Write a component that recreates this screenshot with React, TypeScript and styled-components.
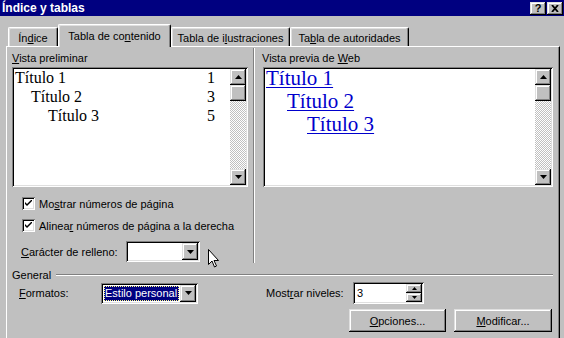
import React from "react";
import styled, { createGlobalStyle, css } from "styled-components";

const GlobalStyle = createGlobalStyle`
  html, body {
    margin: 0;
    padding: 0;
    background: #c0c0c0;
  }
  body {
    font-family: "Liberation Sans", Arial, sans-serif;
    font-size: 11px;
    color: #000;
  }
`;

const raised = css`
  background: #c0c0c0;
  box-shadow: inset -1px -1px #000, inset 1px 1px #dfdfdf,
    inset -2px -2px #808080, inset 2px 2px #fff;
`;

const sunken = css`
  box-shadow: inset 1px 1px #808080, inset -1px -1px #fff,
    inset 2px 2px #000, inset -2px -2px #dfdfdf;
`;

const Window = styled.div`
  position: relative;
  width: 564px;
  height: 338px;
  overflow: hidden;
  background: #c0c0c0;
  display: flex;
  flex-direction: column;
`;

const TitleBar = styled.div`
  height: 16px;
  background: #000080;
  display: flex;
  align-items: center;
  justify-content: space-between;
  padding: 0 1px 0 2px;
`;

const TitleText = styled.span`
  color: #fff;
  font-weight: bold;
  font-size: 12px;
  line-height: 16px;
`;

const TitleButtons = styled.div`
  display: flex;
  gap: 1px;
`;

const TitleButton = styled.div`
  ${raised};
  width: 16px;
  height: 13px;
  display: flex;
  align-items: center;
  justify-content: center;
  font-weight: bold;
  font-size: 11px;
  line-height: 13px;
`;

const Body = styled.div`
  flex: 1;
  display: flex;
  flex-direction: column;
  padding: 8px 4px 0 6px;
`;

const TabStrip = styled.div`
  position: relative;
  z-index: 1;
  height: 22px;
  display: flex;
  align-items: flex-end;
  padding-left: 2px;
`;

const Tab = styled.div<{ $w: number; $active?: boolean }>`
  width: ${(p) => p.$w}px;
  height: ${(p) => (p.$active ? 23 : 19)}px;
  margin-bottom: ${(p) => (p.$active ? -1 : 0)}px;
  box-sizing: border-box;
  background: #c0c0c0;
  border-top: 1px solid #fff;
  border-left: 1px solid #fff;
  border-right: 1px solid #000;
  border-radius: 2px 2px 0 0;
  box-shadow: inset -1px 0 #808080, inset 1px 1px #dfdfdf;
  display: flex;
  align-items: center;
  justify-content: center;
  padding-top: ${(p) => (p.$active ? 0 : 1)}px;
  white-space: nowrap;
`;

const Panel = styled.div`
  position: relative;
  flex: 1;
  display: flex;
  flex-direction: column;
  border-top: 1px solid #fff;
  border-left: 1px solid #fff;
  border-right: 1px solid #000;
  box-shadow: inset -1px 0 #808080;
  padding: 1px 6px 0 5px;
`;

const PreviewRow = styled.div`
  display: flex;
  align-items: stretch;
`;

const Column = styled.div<{ $w?: number }>`
  display: flex;
  flex-direction: column;
  padding-top: 4px;
  ${(p) => (p.$w ? `width: ${p.$w}px;` : "flex: 1;")}
`;

const Separator = styled.div`
  width: 0;
  margin: 0 7px 0 5px;
  border-left: 1px solid #808080;
  border-right: 1px solid #fff;
`;

const Label = styled.div`
  height: 13px;
  line-height: 13px;
  margin-bottom: 2px;
  white-space: nowrap;
`;

const Key = styled.u`
  text-decoration: underline;
`;

const PreviewBox = styled.div<{ $inset?: number }>`
  ${sunken};
  background: #fff;
  height: 120px;
  box-sizing: border-box;
  padding: 2px;
  margin-left: ${(p) => p.$inset ?? 0}px;
  display: flex;
`;

const PreviewContent = styled.div`
  flex: 1;
  background: #fff;
  padding-left: 1px;
`;

const PrintList = styled.div`
  margin-top: -1px;
  padding-right: 15px;
  font-family: "Liberation Serif", "Times New Roman", serif;
  font-size: 16px;
  line-height: 19px;
`;

const PrintLine = styled.div<{ $indent: number }>`
  display: flex;
  justify-content: space-between;
  padding-left: ${(p) => p.$indent}px;
`;

const WebList = styled.div`
  margin-top: -2px;
  font-family: "Liberation Serif", "Times New Roman", serif;
  font-size: 21px;
  line-height: 23px;
`;

const WebLink = styled.div<{ $indent: number }>`
  padding-left: ${(p) => p.$indent}px;
  color: #0000cc;
  text-decoration: underline;
  text-decoration-thickness: 1px;
  text-underline-offset: 2px;
`;

const ScrollBar = styled.div`
  width: 16px;
  display: flex;
  flex-direction: column;
`;

const ScrollButton = styled.div<{ $h?: number }>`
  ${raised};
  width: 16px;
  height: ${(p) => p.$h ?? 16}px;
  display: flex;
  align-items: center;
  justify-content: center;
`;

const Track = styled.div`
  flex: 1;
  background-color: #fff;
  background-image: repeating-conic-gradient(#c0c0c0 0% 25%, #fff 0% 50%);
  background-size: 2px 2px;
`;

const CheckRow = styled.div<{ $top: number }>`
  margin-top: ${(p) => p.$top}px;
  padding-left: 10px;
  height: 13px;
  display: flex;
  align-items: center;
  gap: 4px;
  white-space: nowrap;
`;

const CheckBox = styled.div`
  ${sunken};
  width: 13px;
  height: 13px;
  background: #fff;
  display: flex;
  align-items: center;
  justify-content: center;
`;

const FieldRow = styled.div<{ $top: number; $h: number }>`
  margin-top: ${(p) => p.$top}px;
  height: ${(p) => p.$h}px;
  display: flex;
  align-items: center;
  white-space: nowrap;
`;

const FieldLabel = styled.div<{ $w: number; $indent?: number; $gap?: number }>`
  width: ${(p) => p.$w}px;
  padding-left: ${(p) => p.$indent ?? 0}px;
  margin-left: ${(p) => p.$gap ?? 0}px;
  box-sizing: border-box;
`;

const Combo = styled.div<{ $w: number; $h: number }>`
  ${sunken};
  background: #fff;
  width: ${(p) => p.$w}px;
  height: ${(p) => p.$h}px;
  box-sizing: border-box;
  padding: 2px;
  display: flex;
`;

const ComboValue = styled.div<{ $selected?: boolean }>`
  flex: 1;
  margin: 1px;
  display: flex;
  align-items: center;
  padding-left: 1px;
  ${(p) =>
    p.$selected &&
    css`
      background: #000080;
      color: #fff;
      outline: 1px dotted #ffff80;
      outline-offset: -1px;
    `}
`;

const SpinButtons = styled.div`
  display: flex;
  flex-direction: column;
`;

const GroupHeader = styled.div`
  margin-top: 5px;
  height: 13px;
  display: flex;
  align-items: center;
  gap: 5px;
`;

const GroupLine = styled.div`
  flex: 1;
  border-top: 1px solid #808080;
  border-bottom: 1px solid #fff;
`;

const ButtonRow = styled.div`
  margin-top: 5px;
  display: flex;
  justify-content: flex-end;
  gap: 8px;
  padding-right: 1px;
`;

const PushButton = styled.div<{ $w: number }>`
  ${raised};
  width: ${(p) => p.$w}px;
  height: 23px;
  display: flex;
  align-items: center;
  justify-content: center;
`;

const Cursor = styled.svg`
  position: absolute;
  left: 208px;
  top: 249px;
`;

const Arrow = ({ up }: { up?: boolean }) => (
  <svg width="7" height="4" viewBox="0 0 7 4">
    <path d={up ? "M3.5 0 L7 4 L0 4 Z" : "M0 0 L7 0 L3.5 4 Z"} fill="#000" />
  </svg>
);

const SmallArrow = ({ up }: { up?: boolean }) => (
  <svg width="5" height="3" viewBox="0 0 5 3">
    <path d={up ? "M2.5 0 L5 3 L0 3 Z" : "M0 0 L5 0 L2.5 3 Z"} fill="#000" />
  </svg>
);

const Scroller = () => (
  <ScrollBar>
    <ScrollButton>
      <Arrow up />
    </ScrollButton>
    <ScrollButton />
    <Track />
    <ScrollButton>
      <Arrow />
    </ScrollButton>
  </ScrollBar>
);

const Check = () => (
  <svg width="7" height="7" viewBox="0 0 7 7">
    <path d="M0 2 L2 4 L7 -1 L7 1 L2 6 L0 4 Z" fill="#000" />
  </svg>
);

const printEntries = [
  { title: "Título 1", page: "1", indent: 0 },
  { title: "Título 2", page: "3", indent: 16 },
  { title: "Título 3", page: "5", indent: 33 },
];

const webEntries = [
  { title: "Título 1", indent: 0 },
  { title: "Título 2", indent: 21 },
  { title: "Título 3", indent: 41 },
];

export default function App() {
  return (
    <>
      <GlobalStyle />
      <Window>
        <TitleBar>
          <TitleText>Índice y tablas</TitleText>
          <TitleButtons>
            <TitleButton>?</TitleButton>
            <TitleButton>
              <svg width="8" height="7" viewBox="0 0 8 7">
                <path d="M1 0 L7 7 M7 0 L1 7" stroke="#000" strokeWidth="1.8" />
              </svg>
            </TitleButton>
          </TitleButtons>
        </TitleBar>
        <Body>
          <TabStrip>
            <Tab $w={50}>
              Ín<Key>d</Key>ice
            </Tab>
            <Tab $w={113} $active>
              Tabla de co<Key>n</Key>tenido
            </Tab>
            <Tab $w={119}>
              Tabla de i<Key>l</Key>ustraciones
            </Tab>
            <Tab $w={119}>
              Ta<Key>b</Key>la de autoridades
            </Tab>
          </TabStrip>
          <Panel>
            <PreviewRow>
              <Column $w={236}>
                <Label>
                  <Key>V</Key>ista preliminar
                </Label>
                <PreviewBox>
                  <PreviewContent>
                    <PrintList>
                      {printEntries.map((e) => (
                        <PrintLine key={e.title} $indent={e.indent}>
                          <span>{e.title}</span>
                          <span>{e.page}</span>
                        </PrintLine>
                      ))}
                    </PrintList>
                  </PreviewContent>
                  <Scroller />
                </PreviewBox>
                <CheckRow $top={10}>
                  <CheckBox>
                    <Check />
                  </CheckBox>
                  <span>
                    Mo<Key>s</Key>trar números de página
                  </span>
                </CheckRow>
                <CheckRow $top={9}>
                  <CheckBox>
                    <Check />
                  </CheckBox>
                  <span>
                    Alinea<Key>r</Key> números de página a la derecha
                  </span>
                </CheckRow>
                <FieldRow $top={9} $h={21}>
                  <FieldLabel $w={114} $indent={9}>
                    <Key>C</Key>arácter de relleno:
                  </FieldLabel>
                  <Combo $w={74} $h={21}>
                    <ComboValue />
                    <ScrollButton $h={17}>
                      <Arrow />
                    </ScrollButton>
                  </Combo>
                </FieldRow>
                <div style={{ height: 1 }} />
              </Column>
              <Separator />
              <Column>
                <Label>
                  Vista previa de <Key>W</Key>eb
                </Label>
                <PreviewBox $inset={1}>
                  <PreviewContent>
                    <WebList>
                      {webEntries.map((e) => (
                        <WebLink key={e.title} $indent={e.indent}>
                          {e.title}
                        </WebLink>
                      ))}
                    </WebList>
                  </PreviewContent>
                  <Scroller />
                </PreviewBox>
              </Column>
            </PreviewRow>
            <GroupHeader>
              <span>General</span>
              <GroupLine />
            </GroupHeader>
            <FieldRow $top={1} $h={22}>
              <FieldLabel $w={89} $indent={7}>
                <Key>F</Key>ormatos:
              </FieldLabel>
              <Combo $w={97} $h={21}>
                <ComboValue $selected>Estilo personal</ComboValue>
                <ScrollButton $h={17}>
                  <Arrow />
                </ScrollButton>
              </Combo>
              <FieldLabel $w={87} $gap={68}>
                Most<Key>r</Key>ar niveles:
              </FieldLabel>
              <Combo $w={71} $h={22}>
                <ComboValue>3</ComboValue>
                <SpinButtons>
                  <ScrollButton $h={9}>
                    <SmallArrow up />
                  </ScrollButton>
                  <ScrollButton $h={9}>
                    <SmallArrow />
                  </ScrollButton>
                </SpinButtons>
              </Combo>
            </FieldRow>
            <ButtonRow>
              <PushButton $w={97}>
                <span>
                  <Key>O</Key>pciones...
                </span>
              </PushButton>
              <PushButton $w={98}>
                <span>
                  <Key>M</Key>odificar...
                </span>
              </PushButton>
            </ButtonRow>
          </Panel>
        </Body>
        <Cursor width="12" height="19" viewBox="0 0 12 19">
          <path
            d="M0.5 0.5 L0.5 15.5 L4 12 L6.5 18 L8.5 17 L6 11.5 L10.5 11.5 Z"
            fill="#fff"
            stroke="#000"
            strokeWidth="1"
          />
        </Cursor>
      </Window>
    </>
  );
}
